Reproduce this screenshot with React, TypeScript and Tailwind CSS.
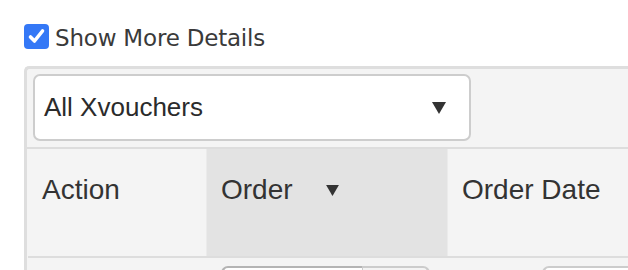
import { useState } from "react";

function Caret({ className }: { className?: string }) {
  return (
    <svg viewBox="0 0 14 12" className={className}>
      <path d="M0 0 L14 0 L7 12 Z" fill="#333" />
    </svg>
  );
}

export default function App() {
  const [showMore, setShowMore] = useState(true);

  return (
    <div className="h-[270px] w-[628px] overflow-hidden bg-white pl-[24px] pt-[24px] font-['Liberation_Sans',Arial,sans-serif]">
      <label className="flex h-[25px] cursor-pointer items-center gap-[6px]">
        <span
          onClick={() => setShowMore(!showMore)}
          className={
            showMore
              ? "flex h-[25px] w-[25px] items-center justify-center rounded-[4px] bg-[#3478f6]"
              : "flex h-[25px] w-[25px] items-center justify-center rounded-[4px] border-2 border-[#999] bg-white"
          }
        >
          {showMore && (
            <svg viewBox="0 0 25 25" className="h-[25px] w-[25px]">
              <path
                d="M6.5 13 L10.5 17 L18.5 7"
                fill="none"
                stroke="white"
                strokeWidth="3.6"
                strokeLinecap="round"
                strokeLinejoin="round"
              />
            </svg>
          )}
        </span>
        <span className="pt-[4px] font-['DejaVu_Sans',Verdana,sans-serif] text-[23px] leading-[25px] tracking-[-0.2px] text-[#3a3a3a]">
          Show More Details
        </span>
      </label>

      <div className="mt-[17px] w-[720px] rounded-tl-[5px] border-l-[3px] border-t-[3px] border-[#dedede] bg-[#f4f4f4]">
        <div className="pl-[6px] pt-[5px]">
          <div className="flex h-[67px] w-[438px] items-center justify-between rounded-[7px] border-2 border-[#cdcdcd] bg-white pl-[9px] pr-[23px]">
            <span className="text-[26px] text-[#2b2b2b]">All Xvouchers</span>
            <Caret className="h-[12px] w-[14px]" />
          </div>
        </div>

        <div className="mt-[6px] border-t-2 border-[#dddddd] pl-[1px]">
          <div className="flex h-[107px] text-[28px] leading-[32px] text-[#333]">
            <div className="w-[179px] border-r border-[#ebebeb] pl-[14px] pt-[25px]">Action</div>
            <div className="flex w-[241px] border-r border-[#ebebeb] bg-[#e3e3e3] pl-[14px] pt-[25px]">
              <span>Order</span>
              <Caret className="ml-[33px] mt-[11px] h-[11px] w-[13px]" />
            </div>
            <div className="flex-1 pl-[14px] pt-[25px]">Order Date</div>
          </div>
          <div className="h-[2px] bg-[#dddddd]" />
          <div className="flex h-[40px] pt-[8px]">
            <div className="w-[179px]" />
            <div className="flex w-[241px] pl-[14px]">
              <div className="h-[40px] w-[141px] rounded-tl-[7px] border-l-2 border-t-2 border-[#b4b4b4] bg-white" />
              <div className="h-[40px] w-[68px] rounded-tr-[7px] border-r-2 border-t-2 border-l border-[#cccccc] bg-[#f4f4f4]" />
            </div>
            <div className="flex-1 pl-[94px]">
              <div className="h-[40px] w-[120px] rounded-tl-[7px] border-l-2 border-t-2 border-[#cccccc] bg-white" />
            </div>
          </div>
        </div>
      </div>
    </div>
  );
}
